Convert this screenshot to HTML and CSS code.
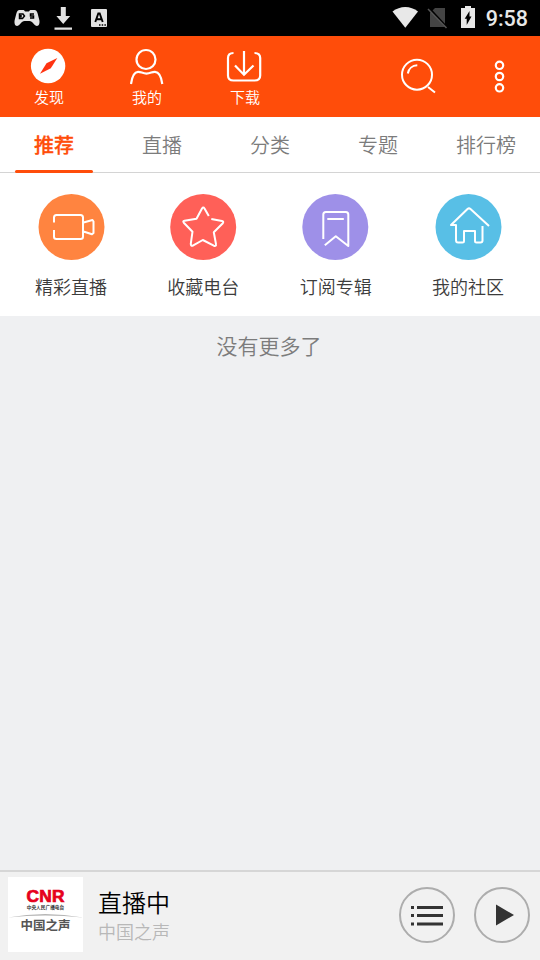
FILE: index.html
```html
<!DOCTYPE html>
<html lang="zh-CN">
<head>
<meta charset="utf-8">
<title>直播</title>
<link rel="stylesheet" href="styles.css">
</head>
<body>
<div class="app">
  <div class="status">
    <svg class="status-left" width="120" height="36" viewBox="0 0 120 36">
      <path fill="#e3e3e3" d="M19.500 10h4c1 0 1 1.500 1.800 1.500h3.400c.8 0 .8-1.500 1.800-1.500h4c1.500 0 2.300 1 3 3l1.800 7c.7 3-.3 6-2.300 6-2.500 0-4.500-5-7.500-5h-5c-3 0-5 5-7.500 5-2 0-3-3-2.300-6l1.800-7c.7-2 1.500-3 3-3z"/>
      <path fill="none" stroke="#000" stroke-width="1.500" d="M19.500 14h3.500l1.500 2-2 2.500h-3zM21 15v2.500M34 14h-3.500v2h3v2h-3.500"/>
      <path fill="#e3e3e3" d="M60.800 7h5v9h4.400L63.200 24l-6.800-8h4.400zM54.500 27.500h17.500v2.200H54.500z"/>
      <rect x="91" y="9" width="16" height="18" rx="1" fill="#e3e3e3"/>
      <path fill="none" stroke="#000" stroke-width="1.900" d="M95.300 22l3-8.500h1.400l3 8.500M96.500 19.300h5"/>
      <path fill="#000" d="M99 24.300h1.500v1.500H99zM101.700 24.300h1.500v1.500h-1.500zM104.400 24.300h1.500v1.500h-1.500z"/>
    </svg>
    <div class="status-right">
      <svg width="86" height="36" viewBox="390 0 86 36">
        <path fill="#e8e8e8" d="M392.500 11.500c7.500-6 18-6 25.500 0L405.300 27.700z"/>
        <path fill="#444" d="M435 8h10v19h-15V13z"/>
        <path stroke="#000" stroke-width="2" d="M429 8l18 19.500"/>
        <path stroke="#555" stroke-width="1.500" d="M428 9l18.500 19"/>
        <path fill="#e8e8e8" d="M465 6h6v2h4v20h-14V8h4z"/>
        <path fill="#000" d="M469.500 11v5.500h2L466.700 25v-6.300h-2z"/>
      </svg>
      <span class="clock">9:58</span>
    </div>
  </div>

  <header class="header">
    <nav class="nav">
      <a class="nav-item">
        <svg width="36" height="36" viewBox="30 48 36 36"><circle cx="48.100" cy="66" r="17.200" fill="#fff"/><path fill="#f31" d="M57.300 58l-6.500 10.300L40 73.800l6.500-10.500z"/></svg>
        <span>发现</span>
      </a>
      <a class="nav-item">
        <svg width="36" height="36" viewBox="128 48 36 36" fill="none" stroke="#fff" stroke-width="2.200"><circle cx="146" cy="59.500" r="9.500"/><path d="M131 84c.8-6 3-12 7-12.200 3-.2 4.500 1.800 8.500 1.800s5.500-2 8.500-1.800c4 .2 6.500 6.200 7.300 12.200"/></svg>
        <span>我的</span>
      </a>
      <a class="nav-item">
        <svg width="36" height="36" viewBox="226 48 36 36" fill="none" stroke="#fff" stroke-width="2.200"><path d="M233.500 53c-3.500 0-5.500 1.500-5.500 5v17.500c0 3.500 2 5 5.500 5h21c3.500 0 5.700-1.500 5.700-5V58c0-3.500-2.200-5-5.700-5M244 51v23.500M235 65.500l9 9.300 9.500-9.300"/></svg>
        <span>下载</span>
      </a>
    </nav>
    <div class="actions">
      <svg width="40" height="40" viewBox="398 56 40 40" fill="none" stroke="#fff" stroke-width="2"><circle cx="417" cy="74.700" r="15"/><path d="M407.800 73.500c.7-4.800 4.500-8 9.500-8.200M428 87l7 5.500"/></svg>
      <svg width="14" height="40" viewBox="492 56 14 40" fill="none" stroke="#fff" stroke-width="2.200"><circle cx="499.500" cy="65.300" r="3.700"/><circle cx="499.500" cy="76.500" r="3.700"/><circle cx="499.500" cy="87.800" r="3.700"/></svg>
    </div>
  </header>

  <div class="tabs">
    <a class="tab active">推荐</a>
    <a class="tab">直播</a>
    <a class="tab">分类</a>
    <a class="tab">专题</a>
    <a class="tab">排行榜</a>
  </div>

  <section class="shortcuts">
    <a class="shortcut">
      <svg width="66" height="66" viewBox="38 194 66 66" fill="none" stroke="#fff" stroke-width="2" stroke-linejoin="round"><circle cx="71.500" cy="227" r="33" fill="#ff8440" stroke="none"/><path d="M54 222.500v-5q0-2.500 2.500-2.500h24q2.500 0 2.500 2.500v19.200q0 2.300-2.500 2.300h-24q-2.500 0-2.500-2.300V230M83.500 222.500l9-2.500 1 1.500v11.500l-1.500 1.200-8.500-2.700"/></svg>
      <span>精彩直播</span>
    </a>
    <a class="shortcut">
      <svg width="66" height="66" viewBox="170.200 194 66 66" fill="none" stroke="#fff" stroke-width="2" stroke-linejoin="round"><circle cx="203.400" cy="227" r="33" fill="#ff6058" stroke="none"/><path d="M209 216l-4.300-7.500q-1.200-1.800-2.500 0l-5.500 10.200-12 2q-2 .5-.7 2l8.700 9-1.700 12q0 2.700 2 2l10-5.700 11 5.700q2.700.8 2.200-1.500l-2.200-12 9-9q1.200-1.800-.8-2.200l-10.700-2"/></svg>
      <span>收藏电台</span>
    </a>
    <a class="shortcut">
      <svg width="66" height="66" viewBox="302.700 194 66 66" fill="none" stroke="#fff" stroke-width="2" stroke-linejoin="round"><circle cx="335" cy="227" r="33" fill="#9e90e8" stroke="none"/><path d="M323 239v-24.500q0-2.500 2.500-2.500h20q2.500 0 2.500 2.500V246l-12.500-9.700-11 9M327 219h16.500"/></svg>
      <span>订阅专辑</span>
    </a>
    <a class="shortcut">
      <svg width="66" height="66" viewBox="435 194 66 66" fill="none" stroke="#fff" stroke-width="2" stroke-linejoin="round"><circle cx="468.500" cy="227" r="33" fill="#58bfe6" stroke="none"/><path d="M489 226l-18.500-17q-1.500-1.200-3 0L451 225h5v15q0 2.500 2 2.500h4.500q1.500 0 1.500-1.500v-10h11v10q0 1.500 1.500 1.500h4q2 0 2-2V226"/></svg>
      <span>我的社区</span>
    </a>
  </section>

  <main class="feed">没有更多了</main>

  <footer class="player">
    <div class="cover">
      <span class="cnr">CNR</span>
      <span class="cover-sub">中央人民广播电台</span>
      <svg width="75" height="5" viewBox="0 0 75 5"><path fill="#b5b5b5" d="M0 4.500Q37 -2.500 75 4.500Q37 .5 0 4.500z"/></svg>
      <span class="cover-name">中国之声</span>
    </div>
    <div class="info">
      <div class="title">直播中</div>
      <div class="station">中国之声</div>
    </div>
    <div class="controls">
      <svg width="56" height="56" viewBox="399 887 56 56"><circle cx="427" cy="915" r="27" fill="none" stroke="#adadad" stroke-width="2"/><path fill="#333" d="M411 906h3v3h-3zM417 906h26v3h-26zM411 914h3v3h-3zM417 914h26v3h-26zM411 922.500h3v3h-3zM417 922.500h26v3h-26z"/></svg>
      <svg width="56" height="56" viewBox="474 887 56 56"><circle cx="502" cy="915" r="27" fill="none" stroke="#adadad" stroke-width="2"/><path fill="#333" d="M496 904.500l18 10.500-18 10.500z"/></svg>
    </div>
  </footer>
</div>
</body>
</html>
```

FILE: styles.css
```css
* { box-sizing: border-box; }
body {
  margin: 0;
  font-family: "Noto Sans CJK SC", sans-serif;
  font-weight: 350;
}
svg { display: block; flex: none; overflow: visible; }
.app {
  display: flex;
  flex-direction: column;
  width: 540px;
  height: 960px;
  overflow: hidden;
  background: #eff0f2;
}
.status {
  display: flex;
  justify-content: space-between;
  height: 36px;
  background: #000;
}
.status-right {
  display: flex;
  align-items: center;
  gap: 10px;
  padding-right: 12px;
}
.clock {
  color: #e8e8e8;
  font: 500 21.500px/36px Roboto, sans-serif;
  padding-top: 2px;
}
.header {
  display: flex;
  justify-content: space-between;
  height: 81px;
  background: #ff4d0a;
}
.nav { display: flex; }
.nav-item {
  display: flex;
  flex-direction: column;
  align-items: center;
  width: 98px;
  padding-top: 12px;
  color: #fff;
  font-size: 15px;
  line-height: 20px;
}
.nav-item svg { margin: 0 2px 3px 0; }
.actions {
  display: flex;
  gap: 54px;
  padding: 20px 34px 0 0;
}
.tabs {
  display: grid;
  grid-template-columns: repeat(5, 1fr);
  height: 56px;
  background: #fff;
  border-bottom: 1px solid #d4d4d4;
}
.tab {
  height: 56px;
  color: #7c7c7c;
  font-size: 20px;
  line-height: 55px;
  text-align: center;
}
.tab.active {
  color: #ff4d0a;
  font-weight: 500;
  -webkit-text-stroke: 0.300px #ff4d0a;
}
.tab.active::after {
  content: "";
  display: block;
  width: 78px;
  height: 3px;
  margin: -2px auto 0 15px;
  border-radius: 2px;
  background: #ff4d0a;
}
.shortcuts {
  display: flex;
  justify-content: space-between;
  height: 143px;
  padding: 21px 36px 0 35px;
  background: #fff;
}
.shortcut {
  display: flex;
  flex-direction: column;
  align-items: center;
  gap: 13px;
  color: #3c3c3c;
  font-size: 18px;
  line-height: 26px;
}
.feed {
  flex: 1;
  padding: 14px 2px 0 0;
  color: #7c7c7c;
  font-size: 21px;
  line-height: 30px;
  text-align: center;
}
.player {
  display: flex;
  height: 90px;
  padding: 5px 10px 0 8px;
  border-top: 2px solid #d6d6d6;
  background: #f1f1f1;
}
.cover {
  display: flex;
  flex-direction: column;
  align-items: center;
  width: 75px;
  height: 75px;
  padding-top: 12px;
  background: #fff;
}
.cnr {
  color: #e6001c;
  font: 700 16px/15px "Liberation Sans", sans-serif;
  letter-spacing: 0.200px;
  transform: scaleX(1.080);
  -webkit-text-stroke: 0.700px #e6001c;
}
.cover-sub {
  color: #333;
  font-size: 4.700px;
  font-weight: 700;
  line-height: 6px;
  margin: 0 0 3px;
  white-space: nowrap;
}
.cover-name {
  color: #555;
  font-size: 12.500px;
  font-weight: 700;
  line-height: 14px;
}
.info { margin-left: 15px; }
.title {
  color: #000;
  font-size: 24px;
  line-height: 32px;
  padding-top: 9px;
}
.station {
  color: #b8b8b8;
  font-size: 18px;
  line-height: 26px;
}
.controls {
  display: flex;
  gap: 19px;
  margin-left: auto;
  padding-top: 10px;
}
```
